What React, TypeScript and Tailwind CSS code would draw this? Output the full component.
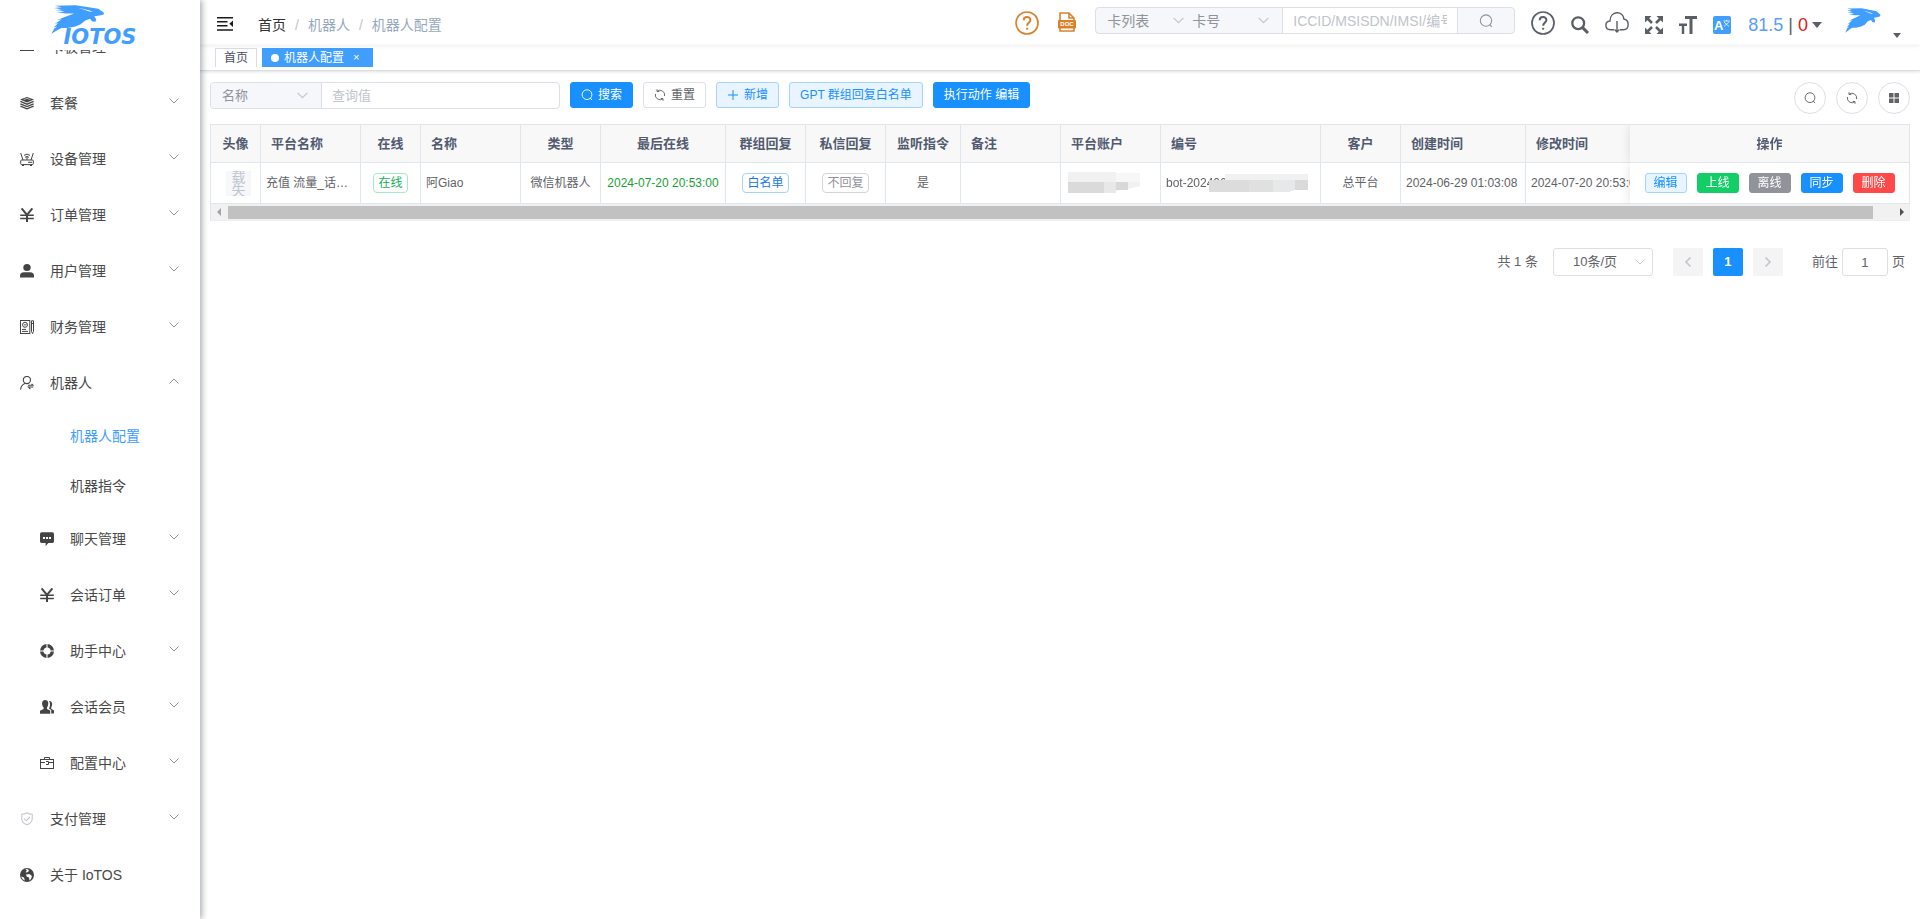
import React, { useState } from "react";

type IconProps = { className?: string };

// ─── Icons ───────────────────────────────

function ChevronDown({ className = "" }: IconProps) {
  return (
    <svg viewBox="0 0 12 12" className={className} fill="none" stroke="currentColor">
      <path d="M1.5 3.5 L6 8 L10.5 3.5" />
    </svg>
  );
}

function SearchThin({ className = "" }: IconProps) {
  return (
    <svg viewBox="0 0 14 14" className={className} fill="none" stroke="currentColor" strokeWidth="1.1">
      <circle cx="7" cy="6.6" r="5.7" />
      <path d="M10.8 10.6 L12.8 12.9" />
    </svg>
  );
}

function RefreshIcon({ className = "" }: IconProps) {
  return (
    <svg viewBox="0 0 14 14" className={className} fill="none" stroke="currentColor" strokeWidth="1.1">
      <path d="M3.6 2.6 A5.5 5.5 0 0 1 12.3 8.2 M1.7 5.8 A5.5 5.5 0 0 0 10.4 11.4" />
      <path d="M3.5 .3 V2.9 H6.2 M10.5 13.7 V11.1 H7.8" />
    </svg>
  );
}

function GridIcon({ className = "" }: IconProps) {
  return (
    <svg viewBox="0 0 12 12" className={className} fill="currentColor">
      <rect x="1" y="1" width="4.5" height="4.5" />
      <rect x="6.5" y="1" width="4.5" height="4.5" />
      <rect x="1" y="6.5" width="4.5" height="4.5" />
      <rect x="6.5" y="6.5" width="4.5" height="4.5" />
    </svg>
  );
}

function HelpIcon({ className = "" }: IconProps) {
  return (
    <svg viewBox="0 0 24 24" className={className} fill="none" stroke="currentColor" strokeWidth="1.7">
      <circle cx="12" cy="12" r="11" />
      <path d="M8.7 9.3 C8.7 5 15.4 5 15.4 9.1 C15.4 11.7 12.1 11.6 12.1 14.8" strokeWidth="2" />
      <circle cx="12.1" cy="17.7" r=".7" fill="currentColor" strokeWidth="1" />
    </svg>
  );
}

function EagleIcon({ className = "" }: IconProps) {
  return (
    <svg viewBox="34 13 162 90" className={className} fill="#409eff" preserveAspectRatio="none">
      <path d="M45 15 L108 14 L142 19 L176 25 L192 36 L193 42 L184 45 L164 48 L170 58 L167 65 L158 64 L151 56 L137 61 L123 73 L107 80 L83 84 L65 84 L50 93 L35 102 L44 86 L53 80 L42 83 L56 69 L45 72 L66 57 L51 60 L75 50 L92 44 L103 39 L77 39 L50 35 L75 34 L62 30 L47 29 L65 26 L43 22 L66 20 Z" />
      <path d="M114 21 L150 30 L160 35 L149 33 Z" fill="#fff" />
    </svg>
  );
}

function MenuIcon({ name }: { name: string }) {
  const cls = "h-[14px] w-[14px] shrink-0 text-[#444]";
  switch (name) {
    case "card":
      return (
        <svg viewBox="0 0 14 14" className={cls} fill="none" stroke="currentColor">
          <rect x=".5" y="1.5" width="13" height="9" />
        </svg>
      );
    case "layers":
      return (
        <svg viewBox="0 0 14 14" className={cls} fill="currentColor">
          <path d="M7 1 L14 3.6 L7 6.4 L0 3.6 Z" />
          <path d="M.4 5.4 L7 8.2 L13.6 5.4 M.4 7.8 L7 10.6 L13.6 7.8 M.4 10.1 L7 12.9 L13.6 10.1" fill="none" stroke="currentColor" strokeWidth="1.3" />
          <path d="M3.6 3.7 L7 2.4 L10.4 3.7" fill="none" stroke="#fff" strokeWidth=".6" />
        </svg>
      );
    case "router":
      return (
        <svg viewBox="0 0 14 14" className={cls} fill="none" stroke="currentColor">
          <rect x=".7" y="8" width="12.6" height="4.6" rx="1" />
          <path d="M3 8 L.7 1 M11 8 L13.3 1 M4 3.4 Q7 .8 10 3.4 M5 5.4 Q7 3.4 9 5.4 M7 5 V8 M8 10.3 H12 M2 13.5 H4 M10 13.5 H12" />
        </svg>
      );
    case "yen":
      return (
        <svg viewBox="0 0 14 14" className={cls} fill="none" stroke="currentColor" strokeWidth="2">
          <path d="M1.6 .4 L7 7 L12.4 .4 M7 7 V14" />
          <path d="M.2 7.2 H13.8 M.2 10.4 H13.8" strokeWidth="1.5" />
        </svg>
      );
    case "user":
      return (
        <svg viewBox="0 0 14 14" className={cls} fill="currentColor">
          <ellipse cx="7" cy="3.6" rx="3.7" ry="3.5" />
          <path d="M0 13.5 V11.5 Q0 8.5 4 8.2 H10 Q14 8.5 14 11.5 V13.5 Z" />
        </svg>
      );
    case "finance":
      return (
        <svg viewBox="0 0 14 14" className={cls} fill="none" stroke="currentColor">
          <rect x=".5" y=".5" width="9.3" height="13" />
          <circle cx="5" cy="4.8" r="2.5" />
          <path d="M4 4.2 L5 5.4 L6.4 4 M2 9.4 H6 M2 11.4 H8 M11.5 .8 H13.5 V11.5 L12.5 13.5 L11.5 11.5 Z M11.5 3.5 H13.5" />
        </svg>
      );
    case "robot":
      return (
        <svg viewBox="0 0 14 14" className={cls} fill="none" stroke="currentColor" strokeWidth="1.1">
          <circle cx="6.9" cy="4" r="3.6" />
          <path d="M.6 13.6 Q1 9 5 7.6 M8 9.2 H13 L11.6 7.8 M13.4 11 H8.4 L10.4 13.2" />
        </svg>
      );
    case "chat":
      return (
        <svg viewBox="0 0 14 14" className={cls} fill="currentColor">
          <path d="M1.6 .3 H12.4 Q14 .3 14 2 V9.6 Q14 11 12.4 11 H8.4 L5.6 14 V11 H1.6 Q0 11 0 9.6 V2 Q0 .3 1.6 .3 Z" />
          <path d="M3 5 H5 V7 H3 Z M6 5 H8 V7 H6 Z M9 5 H11 V7 H9 Z" fill="#fff" />
        </svg>
      );
    case "lifebuoy":
      return (
        <svg viewBox="0 0 14 14" className={cls} fill="none" stroke="currentColor">
          <circle cx="7" cy="7" r="5.3" strokeWidth="3.4" />
          <path d="M7 0 V4 M7 10 V14 M0 7 H4 M10 7 H14" stroke="#fff" strokeWidth="1.1" />
        </svg>
      );
    case "members":
      return (
        <svg viewBox="0 0 14 14" className={cls} fill="currentColor">
          <path d="M5.2 0 C9 0 9 5 7 7.6 V9 L10.2 10.6 V13.8 H0 V10.8 L3.6 9 V7.6 C1.4 5 1.4 0 5.2 0 Z" />
          <path d="M9 1 C12.6 .6 12.8 5 11.2 7.4 V8.8 L14 10.4 V13.4 H11.2 V10 L9 8.6 C10.4 6 10.4 3 9 1 Z" />
        </svg>
      );
    case "toolbox":
      return (
        <svg viewBox="0 0 14 14" className={cls} fill="none" stroke="currentColor">
          <rect x=".5" y="3.5" width="13" height="9" />
          <path d="M4.5 3.5 V1.5 H9.5 V3.5 M.5 6.5 H5 M9 6.5 H13.5 M6 5.5 H8.5 V8.5 H6" />
        </svg>
      );
    case "shield":
      return (
        <svg viewBox="0 0 14 14" className="h-[14px] w-[14px] shrink-0 text-[#c3c8d1]" fill="none" stroke="currentColor" strokeWidth="1.1">
          <path d="M7 .8 Q9 2.2 12.2 2.2 V7 Q12 11 7 12.8 Q2 11 1.8 7 V2.2 Q5 2.2 7 .8 Z M4 6.6 L6.4 8.8 L10 5" />
        </svg>
      );
    default:
      return (
        <svg viewBox="0 0 14 14" className={cls} fill="currentColor">
          <circle cx="7" cy="7" r="7" />
          <path d="M5.4 1 L8 1.2 L9 3 L7 4.6 L5.6 4.2 L6.8 2.4 Z M6 6.6 L9.4 6 L12 8 L11 11 L9.5 12.4 L9 9.4 L6.6 8.6 Z M1 8.4 L4 9.4 L4.8 12.4 L2.6 11.2 Z" fill="#fff" />
        </svg>
      );
  }
}

// ─── Data ───────────────────────────────

const menu = [
  { label: "卡板管理", icon: "card" },
  { label: "套餐", icon: "layers" },
  { label: "设备管理", icon: "router" },
  { label: "订单管理", icon: "yen" },
  { label: "用户管理", icon: "user" },
  { label: "财务管理", icon: "finance" },
  { label: "机器人", icon: "robot", open: true },
];

const robotPages = ["机器人配置", "机器指令"];

const robotGroups = [
  { label: "聊天管理", icon: "chat" },
  { label: "会话订单", icon: "yen" },
  { label: "助手中心", icon: "lifebuoy" },
  { label: "会话会员", icon: "members" },
  { label: "配置中心", icon: "toolbox" },
];

const columns = [
  { label: "头像", width: "w-[50px]", align: "text-center" },
  { label: "平台名称", width: "w-[100px]", align: "text-left" },
  { label: "在线", width: "w-[60px]", align: "text-center" },
  { label: "名称", width: "w-[100px]", align: "text-left" },
  { label: "类型", width: "w-[80px]", align: "text-center" },
  { label: "最后在线", width: "w-[125px]", align: "text-center" },
  { label: "群组回复", width: "w-[80px]", align: "text-center" },
  { label: "私信回复", width: "w-[80px]", align: "text-center" },
  { label: "监听指令", width: "w-[75px]", align: "text-center" },
  { label: "备注", width: "w-[100px]", align: "text-left" },
  { label: "平台账户", width: "w-[100px]", align: "text-left" },
  { label: "编号", width: "w-[160px]", align: "text-left" },
  { label: "客户", width: "w-[80px]", align: "text-center" },
  { label: "创建时间", width: "w-[125px]", align: "text-left" },
  { label: "修改时间", width: "w-[125px]", align: "text-left" },
];

const actions = [
  { label: "编辑", style: "border-[#a3d3ff] bg-[#e8f4ff] text-[#1890ff]" },
  { label: "上线", style: "border-[#13ce66] bg-[#13ce66] text-white" },
  { label: "离线", style: "border-[#909399] bg-[#909399] text-white" },
  { label: "同步", style: "border-[#1890ff] bg-[#1890ff] text-white" },
  { label: "删除", style: "border-[#ff4949] bg-[#ff4949] text-white" },
];

// ─── Sidebar ───────────────────────────────

function MenuItem({ label, icon, nested, open, arrow = true }: { label: string; icon: string; nested?: boolean; open?: boolean; arrow?: boolean }) {
  return (
    <a href="#" className={`flex h-14 items-center pr-5 text-sm text-[#484848] ${nested ? "pl-10" : "pl-5"}`}>
      <MenuIcon name={icon} />
      <span className="ml-4 flex-1">{label}</span>
      {arrow && <ChevronDown className={`mb-1 h-3 w-3 text-[#909399] ${open ? "rotate-180" : ""}`} />}
    </a>
  );
}

function Sidebar() {
  return (
    <aside className="z-20 flex h-screen w-[200px] shrink-0 flex-col bg-white shadow-[2px_0_6px_rgba(0,21,41,0.35)]">
      <a href="#" className="flex h-[50px] shrink-0 flex-col items-center overflow-hidden pt-[5px]">
        <EagleIcon className="mr-11 h-[29px] w-[54px] shrink-0" />
        <span className="-mt-[7px] font-['DejaVu_Sans'] text-[21px] leading-5 font-bold text-[#409eff] italic">IOTOS</span>
      </a>
      {/* list is scrolled down a little, first entry is half under the logo */}
      <div className="min-h-0 flex-1 overflow-hidden">
        <nav className="-mt-[31px]">
          {menu.map((m) => (
            <MenuItem key={m.label} {...m} />
          ))}
          {robotPages.map((p, i) => (
            <a key={p} href="#" className={`flex h-[50px] items-center pl-[70px] text-sm ${i === 0 ? "text-[#409eff]" : "text-[#484848]"}`}>
              {p}
            </a>
          ))}
          {robotGroups.map((m) => (
            <MenuItem key={m.label} {...m} nested />
          ))}
          <MenuItem label="支付管理" icon="shield" />
          <MenuItem label="关于 IoTOS" icon="globe" arrow={false} />
        </nav>
      </div>
    </aside>
  );
}

// ─── Top bar ───────────────────────────────

function PlainSelect({ label, value, className }: { label: string; value: string; className: string }) {
  return (
    <div className={`relative flex items-center ${className}`}>
      <select aria-label={label} className="h-full w-full appearance-none bg-transparent pl-[11px] text-[#909399] outline-none">
        <option>{value}</option>
      </select>
      <ChevronDown className="pointer-events-none absolute right-3 h-[13px] w-[13px] text-[#c0c4cc]" />
    </div>
  );
}

function Navbar() {
  return (
    <header className="flex h-[45px] items-start shadow-[0_1px_4px_rgba(0,21,41,0.08)]">
      <button aria-label="折叠菜单" className="mt-4 ml-[17px]">
        <svg viewBox="0 0 16 16" className="h-4 w-4" fill="none" stroke="#1a1a1a" strokeWidth="1.5">
          <path d="M0 1.7 H16 M0 5.7 H10.5 M0 9.7 H10.5 M0 14 H16" />
          <path d="M16 4.5 V11 L12.3 7.7 Z" fill="#1a1a1a" stroke="none" />
        </svg>
      </button>
      <nav className="mt-[15px] ml-[25px] flex text-sm text-[#97a8be]">
        <a href="#" className="text-[#303133]">首页</a>
        <span className="mx-[9px] text-[#c0c4cc]">/</span>
        <span>机器人</span>
        <span className="mx-[9px] text-[#c0c4cc]">/</span>
        <span>机器人配置</span>
      </nav>

      <div className="ml-auto flex items-start text-[#5a5e66]">
        <button aria-label="帮助" className="mt-[11px] text-[#d9822b]">
          <HelpIcon className="h-6 w-6" />
        </button>
        <button aria-label="文档" className="mt-3 ml-[19px]">
          <svg viewBox="0 0 18 20" className="h-5 w-[18px]" fill="none" stroke="#d9822b" strokeWidth="1.6">
            <path d="M2 8 V1 H11 L16 6 V8 M11 1 V6 H16 M2 16 V19 H16 V16" />
            <rect x="0" y="8" width="18" height="8.5" rx="1" fill="#d9822b" stroke="none" />
            <text x="9" y="14.4" textAnchor="middle" fontSize="6" fontWeight="bold" fill="#fff" stroke="none" fontFamily="Liberation Sans">DOC</text>
          </svg>
        </button>
        <div className="mt-[7px] ml-[19px] flex h-[27px] overflow-hidden rounded border border-[#dcdfe6] bg-[#f5f7fa] text-sm">
          <PlainSelect label="列表" value="卡列表" className="w-[101px]" />
          <PlainSelect label="字段" value="卡号" className="-ml-4 w-[101px]" />
          <input
            aria-label="查询号码"
            placeholder="ICCID/MSISDN/IMSI/编号"
            className="w-[176px] border-x border-[#dcdfe6] bg-white px-[10px] outline-none placeholder:text-[#c0c4cc]"
          />
          <button aria-label="查询" className="flex w-14 items-center justify-center text-[#909399]">
            <SearchThin className="h-[14px] w-[14px]" />
          </button>
        </div>
        <button aria-label="使用帮助" className="mt-[11px] ml-4">
          <HelpIcon className="h-6 w-6" />
        </button>
        <button aria-label="搜索菜单" className="mt-4 ml-4">
          <svg viewBox="0 0 18 18" className="h-[18px] w-[18px]" fill="none" stroke="currentColor" strokeWidth="2.3">
            <circle cx="7.2" cy="7.2" r="5.9" />
            <path d="M11.4 11.4 L17 17" strokeWidth="3" />
          </svg>
        </button>
        <button aria-label="下载" className="mt-3 ml-4">
          <svg viewBox="0 0 24 21" className="h-[21px] w-6" fill="none" stroke="currentColor" strokeWidth="1.4">
            <path d="M9 17.8 H5.5 C-.5 17.6 -.6 9.4 5 9 C5 -1.6 18.6 -1.6 18.8 7 C24.8 8 24.5 17.6 18.5 17.8 H15" />
            <path d="M12 9 V20 M9.6 17.6 L12 20 L14.4 17.6" />
          </svg>
        </button>
        <button aria-label="全屏" className="mt-4 ml-4">
          <svg viewBox="0 0 18 18" className="h-[18px] w-[18px]" fill="currentColor" stroke="currentColor" strokeWidth="2.6">
            <path d="M2 2 L7 7 M16 2 L11 7 M2 16 L7 11 M16 16 L11 11" />
            <path d="M0 0 H6.5 L0 6.5 Z M18 0 V6.5 L11.5 0 Z M0 18 V11.5 L6.5 18 Z M18 18 H11.5 L18 11.5 Z" stroke="none" />
          </svg>
        </button>
        <button aria-label="字号" className="mt-4 ml-4">
          <svg viewBox="0 0 18 18" className="h-[18px] w-[18px]" fill="none" stroke="currentColor">
            <path d="M6 1.5 H18 M12 1.5 V18" strokeWidth="3" />
            <path d="M0 8.7 H8 M4 8.7 V18" strokeWidth="2.4" />
          </svg>
        </button>
        <button aria-label="语言" className="mt-4 ml-4">
          <svg viewBox="0 0 18 18" className="h-[18px] w-[18px]">
            <rect width="18" height="18" rx="2" fill="#409eff" />
            <text x="1" y="14" fontSize="13" fontWeight="bold" fill="#fff" fontFamily="Liberation Sans">A</text>
            <path d="M10.5 5 H17 M13.7 3.8 V5 M11 6 L16 10.5 M16 6 L11 10.5" fill="none" stroke="#fff" strokeWidth=".8" />
          </svg>
        </button>
        <button className="mt-[13px] ml-[17px] flex items-center text-lg leading-6">
          <span className="text-[#5a9cf8]">81.5</span>
          <span className="mx-[5px]">|</span>
          <span className="text-[#e02020]">0</span>
          <svg viewBox="0 0 10 6" className="ml-1 h-[6px] w-[10px]" fill="#5a5e66">
            <path d="M0 0 H10 L5 6 Z" />
          </svg>
        </button>
        <button aria-label="用户" className="mt-2 mr-[19px] ml-[23px] flex items-end">
          <EagleIcon className="h-[25px] w-9" />
          <svg viewBox="0 0 8 5" className="-mb-[5px] ml-3 h-[5px] w-2" fill="#5a5e66">
            <path d="M0 0 H8 L4 5 Z" />
          </svg>
        </button>
      </div>
    </header>
  );
}

function TagsView() {
  return (
    <div className="flex h-[26px] items-start gap-[5px] border-b border-[#d8dce5] pt-[3px] pl-[15px] text-xs shadow-[0_1px_3px_rgba(0,0,0,0.12)]">
      <a href="#" className="flex h-[19px] items-center border border-b-0 border-[#d8dce5] px-2 text-[#495060]">
        首页
      </a>
      <a href="#" className="flex h-[19px] items-center bg-[#409eff] px-[9px] text-white">
        <span className="mr-[5px] h-2 w-2 rounded-full bg-white" />
        机器人配置
        <span className="mr-[5px] ml-[9px] text-[11px]">×</span>
      </a>
    </div>
  );
}

// ─── Search form and buttons ───────────────────────────────

function Toolbar() {
  const [query, setQuery] = useState("");
  const btn = "flex h-[26px] items-center rounded-[3px] border px-[10px] text-xs";

  return (
    <div className="mb-[10px] flex h-8 items-start gap-[10px]">
      <div className="flex h-[27px] w-[350px] overflow-hidden rounded border border-[#dcdfe6] text-[13px]">
        <PlainSelect label="查询字段" value="名称" className="w-[110px] shrink-0 bg-[#f5f7fa]" />
        <input
          aria-label="查询值"
          placeholder="查询值"
          value={query}
          onChange={(e) => setQuery(e.target.value)}
          className="min-w-0 flex-1 border-l border-[#dcdfe6] px-[10px] outline-none placeholder:text-[#c0c4cc]"
        />
      </div>
      <button className={`${btn} border-[#1890ff] bg-[#1890ff] text-white`}>
        <SearchThin className="mr-[5px] h-3 w-3" />
        搜索
      </button>
      <button className={`${btn} border-[#dcdfe6] bg-white text-[#606266]`} onClick={() => setQuery("")}>
        <RefreshIcon className="mr-[5px] h-3 w-3" />
        重置
      </button>
      <button className={`${btn} border-[#a3d3ff] bg-[#e8f4ff] text-[#1890ff]`}>
        <svg viewBox="0 0 12 12" className="mr-[5px] h-3 w-3" stroke="currentColor">
          <path d="M1 6 H11 M6 1 V11" />
        </svg>
        新增
      </button>
      <button className={`${btn} border-[#a3d3ff] bg-[#e8f4ff] text-[#1890ff]`}>GPT 群组回复白名单</button>
      <button className={`${btn} border-[#1890ff] bg-[#1890ff] text-white`}>执行动作 编辑</button>

      <div className="ml-auto flex gap-[10px] text-[#606266]">
        <button aria-label="隐藏搜索" className="flex h-8 w-8 items-center justify-center rounded-full border border-[#dcdfe6]">
          <SearchThin className="h-3 w-3" />
        </button>
        <button aria-label="刷新" className="flex h-8 w-8 items-center justify-center rounded-full border border-[#dcdfe6]">
          <RefreshIcon className="h-3 w-3" />
        </button>
        <button aria-label="显隐列" className="flex h-8 w-8 items-center justify-center rounded-full border border-[#dcdfe6]">
          <GridIcon className="h-3 w-3" />
        </button>
      </div>
    </div>
  );
}

// ─── Table ───────────────────────────────

function StatusTag({ children, tone }: { children: React.ReactNode; tone: string }) {
  return <span className={`inline-flex h-5 items-center rounded border px-1 align-middle ${tone}`}>{children}</span>;
}

function BotTable() {
  const cell = "h-[41px] truncate border-r border-b border-[#dfe6ec] px-[5px]";
  // tight padding, content nearly as wide as the column
  const tight = "h-[41px] border-r border-b border-[#dfe6ec] whitespace-nowrap";

  return (
    <div className="overflow-hidden border-t border-l border-[#dfe6ec]">
      <table className="w-full min-w-[1720px] table-fixed border-separate border-spacing-0 text-xs text-[#606266]">
        <thead>
          <tr className="bg-[#f8f8f9] text-[13px] text-[#515a6e]">
            {columns.map((c) => (
              <th key={c.label} className={`h-[38px] border-r border-b border-[#dfe6ec] px-[10px] whitespace-nowrap ${c.width} ${c.align}`}>
                {c.label}
              </th>
            ))}
            <th className="sticky right-0 w-[280px] border-r border-b border-[#dfe6ec] bg-[#f8f8f9] text-center shadow-[0_0_10px_rgba(0,0,0,0.12)] [clip-path:inset(0_0_0_-12px)]">
              操作
            </th>
          </tr>
        </thead>
        <tbody>
          <tr>
            <td className={tight}>
              <div className="ml-[15px] h-[25px] w-[25px] overflow-hidden bg-[#f5f7fa] text-center text-sm leading-[13px] whitespace-normal text-[#c0c4cc]">
                载
                <br />
                失
              </div>
            </td>
            <td className={cell}>充值 流量_话费充值</td>
            <td className={`${tight} text-center`}>
              <StatusTag tone="border-[#a1ebc2] text-[#13b05a]">在线</StatusTag>
            </td>
            <td className={cell}>阿Giao</td>
            <td className={`${tight} text-center`}>微信机器人</td>
            <td className={`${tight} text-center text-[#1a9f34]`}>2024-07-20 20:53:00</td>
            <td className={`${tight} text-center`}>
              <StatusTag tone="border-[#a3d3ff] text-[#1878e0]">白名单</StatusTag>
            </td>
            <td className={`${tight} text-center`}>
              <StatusTag tone="border-[#d3d4d6] text-[#909399]">不回复</StatusTag>
            </td>
            <td className={`${tight} text-center`}>是</td>
            <td className={cell}></td>
            <td className={cell}>
              {/* masked account */}
              <svg viewBox="0 0 76 22" className="h-[22px] w-[76px]">
                <path d="M2 0 H50 V1 H74 V14 L50 19 H2 Z" fill="#f1f1f1" />
                <path d="M2 10 H38 V21 H2 Z" fill="#dadada" />
                <path d="M38 10 H50 V21 H38 Z" fill="#e8e8e8" />
                <path d="M50 10 H62 V18 H50 Z" fill="#d8d8d8" />
                <path d="M62 10 H74 V14 L62 17 Z" fill="#f1f1f1" />
                <path d="M50 1 H74 V10 H50 Z" fill="#f7f7f7" />
              </svg>
            </td>
            <td className={`${cell} relative`}>
              bot-202406
              <svg viewBox="0 0 100 18" className="absolute top-[11px] left-[48px] h-[18px] w-[100px]">
                <path d="M16 0 H99 V6 H16 Z" fill="#f1f1f1" />
                <path d="M0 6 H40 V18 H0 Z" fill="#dcdcdc" />
                <path d="M40 6 H64 V18 H40 Z" fill="#e0e0e0" />
                <path d="M64 6 H86 V16 L80 18 H64 Z" fill="#e6e8ea" />
                <path d="M86 6 H99 V16 H86 Z" fill="#dadada" />
              </svg>
            </td>
            <td className={`${tight} text-center`}>总平台</td>
            <td className={`${tight} pl-[5px]`}>2024-06-29 01:03:08</td>
            <td className={`${tight} pl-[5px]`}>2024-07-20 20:53:00</td>
            <td className="sticky right-0 border-r border-b border-[#dfe6ec] bg-white shadow-[0_0_10px_rgba(0,0,0,0.12)] [clip-path:inset(0_0_-12px_-12px)]">
              <div className="flex justify-center gap-[10px]">
                {actions.map((a) => (
                  <button key={a.label} className={`h-5 w-[42px] rounded-[3px] border leading-[18px] ${a.style}`}>
                    {a.label}
                  </button>
                ))}
              </div>
            </td>
          </tr>
        </tbody>
      </table>
      {/* scroll track */}
      <div className="sticky left-0 flex h-[17px] items-center border-r border-b border-[#ebeef5] bg-[#f1f1f1]">
        <svg viewBox="0 0 4 8" className="mr-[7px] ml-[6px] h-2 w-1 shrink-0" fill="#a3a3a3">
          <path d="M4 0 V8 L0 4 Z" />
        </svg>
        <div className="mr-[27px] h-[13px] flex-1 bg-[#c1c1c1]" />
        <svg viewBox="0 0 4 8" className="mr-[5px] h-2 w-1 shrink-0" fill="#505050">
          <path d="M0 0 V8 L4 4 Z" />
        </svg>
      </div>
    </div>
  );
}

function Pagination() {
  return (
    <div className="mt-[27px] flex h-7 items-center justify-end pr-[5px] text-[13px] text-[#606266]">
      <span className="mr-[15px]">共 1 条</span>
      <div className="relative mr-5 flex h-7 w-[100px] items-center rounded-[3px] border border-[#dcdfe6]">
        <select aria-label="每页条数" className="h-full w-full appearance-none bg-transparent pl-[19px] outline-none">
          <option>10条/页</option>
        </select>
        <ChevronDown className="pointer-events-none absolute right-[6px] h-3 w-3 text-[#c0c4cc]" />
      </div>
      <button aria-label="上一页" className="mr-[10px] flex h-7 w-[30px] items-center justify-center rounded-[2px] bg-[#f4f4f5] text-[#c0c4cc]">
        <ChevronDown className="h-3 w-3 rotate-90 stroke-[1.6]" />
      </button>
      <button className="mr-[10px] h-7 w-[30px] rounded-[2px] bg-[#1890ff] font-bold text-white">1</button>
      <button aria-label="下一页" className="mr-[29px] flex h-7 w-[30px] items-center justify-center rounded-[2px] bg-[#f4f4f5] text-[#c0c4cc]">
        <ChevronDown className="h-3 w-3 -rotate-90 stroke-[1.6]" />
      </button>
      <label htmlFor="page">前往</label>
      <input id="page" defaultValue="1" className="mx-1 h-7 w-[46px] rounded-[3px] border border-[#dcdfe6] text-center outline-none" />
      <span>页</span>
    </div>
  );
}

export default function App() {
  return (
    <div className="flex h-screen bg-white font-['Liberation_Sans','Noto_Sans_CJK_SC',sans-serif]">
      <Sidebar />
      <div className="min-w-0 flex-1">
        <Navbar />
        <TagsView />
        <main className="px-[10px] pt-[11px]">
          <Toolbar />
          <BotTable />
          <Pagination />
        </main>
      </div>
    </div>
  );
}
